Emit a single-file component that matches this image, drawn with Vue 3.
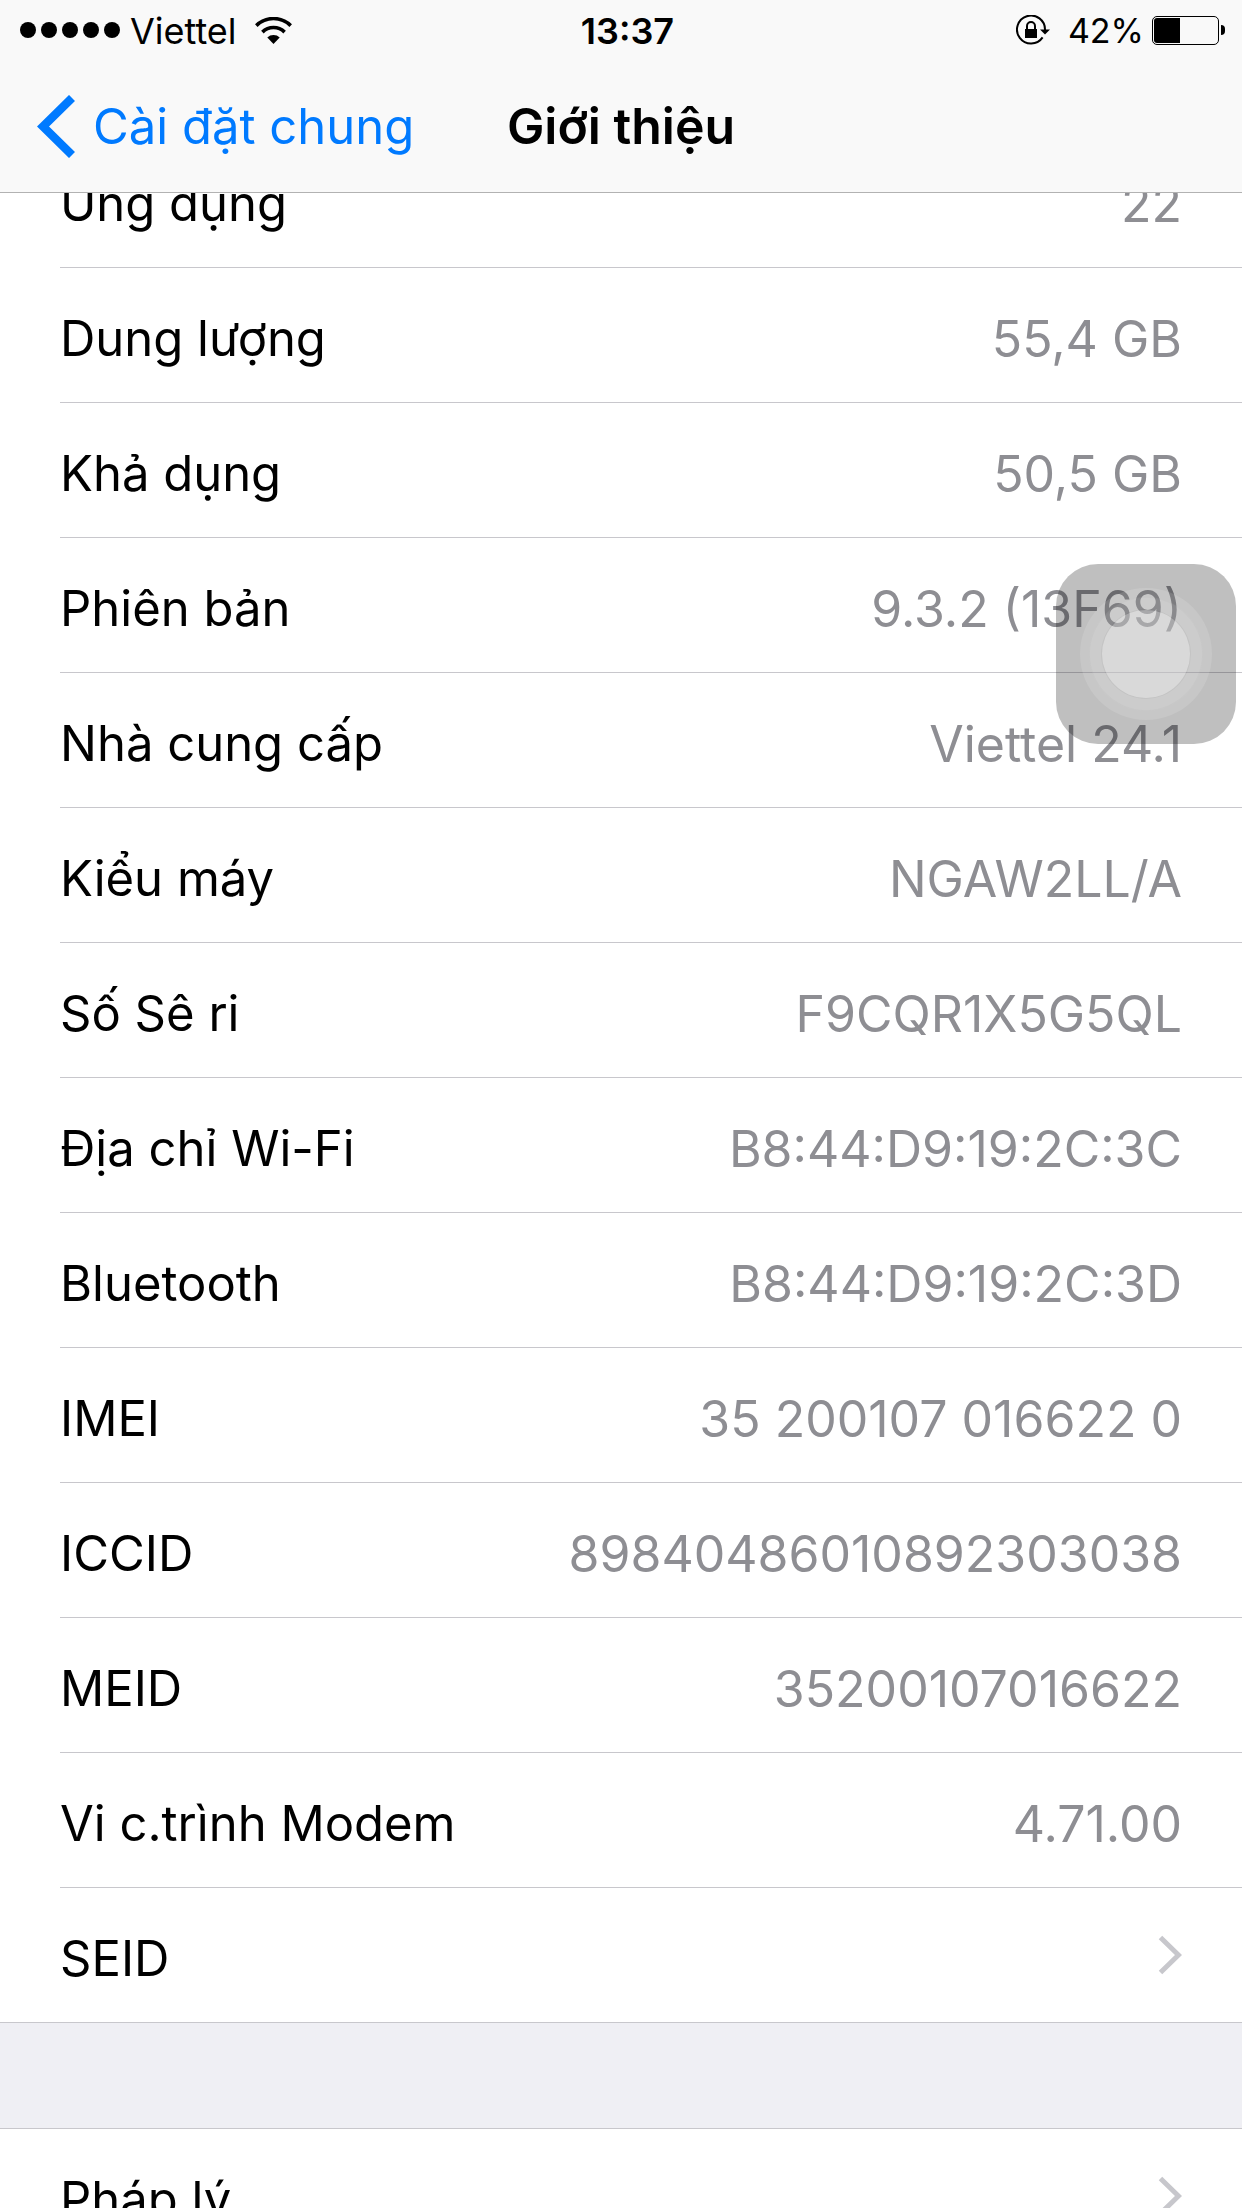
<script setup>
const signalDots = 5
const batteryLevel = 42

const details = [
  { label: 'Ứng dụng', value: '22' },
  { label: 'Dung lượng', value: '55,4 GB' },
  { label: 'Khả dụng', value: '50,5 GB' },
  { label: 'Phiên bản', value: '9.3.2 (13F69)' },
  { label: 'Nhà cung cấp', value: 'Viettel 24.1' },
  { label: 'Kiểu máy', value: 'NGAW2LL/A' },
  { label: 'Số Sê ri', value: 'F9CQR1X5G5QL' },
  { label: 'Địa chỉ Wi-Fi', value: 'B8:44:D9:19:2C:3C' },
  { label: 'Bluetooth', value: 'B8:44:D9:19:2C:3D' },
  { label: 'IMEI', value: '35 200107 016622 0' },
  { label: 'ICCID', value: '89840486010892303038' },
  { label: 'MEID', value: '35200107016622' },
  { label: 'Vi c.trình Modem', value: '4.71.00' },
  { label: 'SEID', link: true },
]

const groups = [details, [{ label: 'Pháp lý', link: true }]]
</script>

<template>
  <div class="screen">
    <header class="bar">
      <div class="status">
        <div class="status-left">
          <span class="signal">
            <i v-for="n in signalDots" :key="n" class="dot"></i>
          </span>
          <span class="carrier">Viettel</span>
          <svg class="wifi" viewBox="0 0 37 27" aria-hidden="true">
            <path d="M1.3 8.6a24.5 24.5 0 0 1 34.4 0" fill="none" stroke="#000" stroke-width="3.6" />
            <path d="M7.4 15.1a15.8 15.8 0 0 1 22.2 0" fill="none" stroke="#000" stroke-width="3.6" />
            <path d="M18.5 27 12.3 20.6a9 9 0 0 1 12.4 0z" />
          </svg>
        </div>
        <time class="clock">13:37</time>
        <div class="status-right">
          <svg class="lock" viewBox="0 0 34 30" aria-hidden="true">
            <path d="M26.6 22.4A14 14 0 1 1 29 15v.6" fill="none" stroke="#000" stroke-width="2" />
            <path d="M24 14.4h10L29 19.4z" />
            <path d="M9 14h12v9H9z" />
            <path d="M11 14.5V11a4 4 0 0 1 8 0v3.5" fill="none" stroke="#000" stroke-width="2" />
          </svg>
          <span class="percent">{{ batteryLevel }}%</span>
          <span class="battery">
            <span class="cell"><span class="charge" :style="{ width: batteryLevel + '%' }"></span></span>
            <span class="cap"></span>
          </span>
        </div>
      </div>
      <nav class="nav">
        <a class="back" href="#general">
          <svg class="back-icon" viewBox="0 0 38 63" aria-hidden="true">
            <path d="M35 3 6 31.5 35 60" fill="none" stroke="#007aff" stroke-width="8.5" />
          </svg>
          <span class="back-text">Cài đặt chung</span>
        </a>
        <h1 class="title">Giới thiệu</h1>
      </nav>
    </header>

    <main class="scroll">
      <ul v-for="(rows, g) in groups" :key="g" class="group">
        <li v-for="row in rows" :key="row.label" class="item">
          <component :is="row.link ? 'a' : 'div'" class="row" :href="row.link ? '#' + g : null">
            <span class="label">{{ row.label }}</span>
            <span v-if="row.value" class="value">{{ row.value }}</span>
            <svg v-if="row.link" class="chevron" viewBox="0 0 24 40" aria-hidden="true">
              <path d="M2.5 2.5 20.5 20 2.5 37.5" fill="none" stroke="#c7c7cc" stroke-width="5" />
            </svg>
          </component>
        </li>
      </ul>
    </main>

    <button class="assistive" type="button" aria-label="AssistiveTouch">
      <span class="ring ring-outer">
        <span class="ring ring-middle">
          <span class="ring ring-inner"></span>
        </span>
      </span>
    </button>
  </div>
</template>

<style>
body {
  margin: 0;
  background: #efeff4;
}
</style>

<style scoped>
.screen {
  position: relative;
  display: flex;
  flex-direction: column;
  height: 100vh;
  overflow: hidden;
  background: #efeff4;
  color: #000;
  font-family: Inter, "Liberation Sans", sans-serif;
  font-size: 50px;
  line-height: 60px;
}

.bar {
  flex: none;
  background: #f9f9f9;
  border-bottom: 1px solid #b2b2b2;
}

.status {
  display: grid;
  grid-template-columns: 1fr auto 1fr;
  align-items: center;
  height: 60px;
  padding: 0 17px 0 20px;
  font-size: 36px;
  line-height: 42px;
}

.status-left,
.status-right {
  display: flex;
  align-items: center;
}

.status-right {
  justify-content: flex-end;
}

.signal {
  display: flex;
  gap: 5px;
}

.dot {
  width: 16px;
  height: 16px;
  border-radius: 50%;
  background: #000;
}

.carrier,
.clock,
.percent {
  padding-top: 2px;
}

.carrier {
  margin-left: 10px;
}

.wifi {
  width: 37px;
  height: 27px;
  margin-left: 18px;
}

.clock {
  padding-left: 10px;
  font-weight: 600;
}

.lock {
  width: 34px;
  height: 30px;
}

.percent {
  margin: 0 8px 0 18px;
  font-size: 34px;
}

.battery {
  display: flex;
  align-items: center;
  gap: 2px;
}

.cell {
  box-sizing: border-box;
  width: 67px;
  height: 29px;
  padding: 1px;
  border: 1px solid #000;
  border-radius: 5px;
}

.charge {
  display: block;
  height: 100%;
  border-radius: 3px 0 0 3px;
  background: #000;
}

.cap {
  width: 4px;
  height: 10px;
  border-radius: 0 4px 4px 0;
  background: #000;
}

.nav {
  display: grid;
  grid-template-columns: 1fr auto 1fr;
  align-items: center;
  height: 132px;
  padding: 0 37px;
}

.back {
  display: flex;
  align-items: center;
  gap: 18px;
  color: #007aff;
  font-size: 49px;
  text-decoration: none;
  white-space: nowrap;
}

.back-icon {
  width: 38px;
  height: 63px;
}

.back-text {
  padding-top: 2px;
}

.title {
  margin: 0;
  font-size: 50px;
  font-weight: 600;
}

/* The list is scrolled so that its first row slides under the bar. */
.scroll {
  flex: 1;
  min-height: 0;
  overflow: hidden;
}

.group {
  margin: 0 0 105px;
  padding: 0;
  list-style: none;
  background: #fff;
  border-bottom: 1px solid #c8c7cc;
}

.group:first-child {
  margin-top: -60px;
}

.group + .group {
  border-top: 1px solid #c8c7cc;
}

.item {
  padding-left: 60px;
}

.row {
  display: flex;
  align-items: center;
  justify-content: space-between;
  height: 134px;
  padding-right: 60px;
  color: inherit;
  text-decoration: none;
}

.item + .item .row {
  border-top: 1px solid #c8c7cc;
}

.label,
.value {
  padding-top: 8px;
  white-space: nowrap;
}

.label {
  font-size: 49px;
}

.value {
  color: #8e8e93;
}

.chevron {
  width: 24px;
  height: 40px;
}

.assistive {
  position: absolute;
  top: 564px;
  right: 6px;
  display: flex;
  align-items: center;
  justify-content: center;
  width: 180px;
  height: 180px;
  padding: 0;
  border: 0;
  border-radius: 42px;
  background: rgba(0, 0, 0, 0.25);
}

.ring {
  display: flex;
  align-items: center;
  justify-content: center;
  border-radius: 50%;
}

.ring-outer {
  width: 132px;
  height: 132px;
  background: rgba(255, 255, 255, 0.13);
}

.ring-middle {
  width: 114px;
  height: 114px;
  background: rgba(255, 255, 255, 0.1);
  box-shadow: inset 0 0 0 1px rgba(0, 0, 0, 0.02);
}

.ring-inner {
  width: 88px;
  height: 88px;
  background: rgba(255, 255, 255, 0.26);
  box-shadow: 0 0 0 1px rgba(0, 0, 0, 0.04);
}
</style>
